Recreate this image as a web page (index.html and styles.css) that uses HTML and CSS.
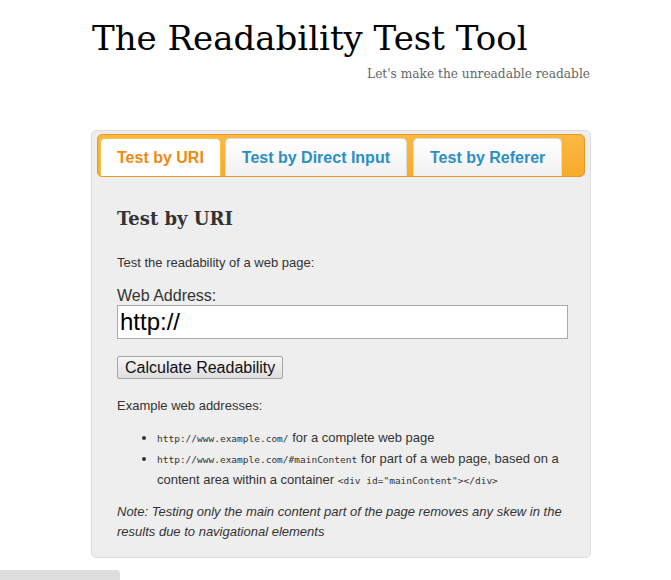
FILE: index.html
```html
<!DOCTYPE html>
<html lang="en">
<head>
    <meta charset="UTF-8">
    <title>The Readability Test Tool</title>
    <link rel="stylesheet" href="styles.css">
</head>
<body>
    <div class="wrap">
        <header class="site-header">
            <h1>The Readability Test Tool</h1>
            <p class="tagline">Let's make the unreadable readable</p>
        </header>

        <div class="panel">
            <ul class="tabs">
                <li class="tab active">Test by URI</li>
                <li class="tab">Test by Direct Input</li>
                <li class="tab">Test by Referer</li>
            </ul>

            <div class="tab-content">
                <h2>Test by URI</h2>
                <p class="intro">Test the readability of a web page:</p>

                <label for="uri" class="field-label">Web Address:</label>
                <input type="text" id="uri" class="uri-input" value="http://">

                <button class="calc-btn">Calculate Readability</button>

                <p class="examples-title">Example web addresses:</p>
                <ul class="examples">
                    <li><code>http://www.example.com/</code> for a complete web page</li>
                    <li><code>http://www.example.com/#mainContent</code> <span>for part of a web page, based on a</span><br><span>content area within a container</span> <code>&lt;div id="mainContent"&gt;&lt;/div&gt;</code></li>
                </ul>

                <p class="note">Note: Testing only the main content part of the page removes any skew in the results due to navigational elements</p>
            </div>
        </div>
    </div>

    <div class="footer-tab"></div>
</body>
</html>
```

FILE: styles.css
```css
body {
    margin: 0;
    background-color: #fff;
    font-family: 'Liberation Sans', Arial, sans-serif;
    color: #333;
}

.wrap {
    width: 500px;
    margin-left: 91px;
}

/* Header */
.site-header {
    padding-top: 15px;
    height: 130px;
    box-sizing: border-box;
}

.site-header h1 {
    margin: 0 0 0 1px;
    font-family: 'DejaVu Serif', serif;
    font-weight: normal;
    font-size: 34px;
    line-height: 46px;
    color: #000;
}

.tagline {
    margin: 6px 1px 0 0;
    text-align: right;
    font-family: 'DejaVu Serif', serif;
    font-size: 12.2px;
    color: #666;
}

/* Panel */
.panel {
    background-color: #eee;
    border: 1px solid #ddd;
    border-radius: 5px;
    padding: 3px 5px 15px 5px;
}

.tabs {
    display: flex;
    list-style: none;
    margin: 0;
    padding: 3px 0 0 2px;
    height: 43px;
    box-sizing: border-box;
    background: linear-gradient(#fbb845, #f7ab2c);
    border: 1px solid #ea9a22;
    border-radius: 5px;
}

.tab {
    padding: 0 16px;
    margin-right: 4px;
    font-size: 16px;
    font-weight: bold;
    line-height: 37px;
    color: #2b8fc4;
    background: linear-gradient(#fff, #f1f1f1);
    border: 1px solid #ddd;
    border-bottom: none;
    border-radius: 5px 5px 0 0;
}

.tab + .tab + .tab {
    margin-left: 2px;
}

.active {
    color: #ee8a12;
    background: #fff;
    border-color: #fcc04d;
}

.tab-content {
    padding: 31px 17px 0 20px;
    font-size: 13px;
}

.tab-content h2 {
    margin: 0 0 23px 0;
    font-family: 'DejaVu Serif', serif;
    font-size: 18px;
    color: #333;
}

.tab-content p {
    margin: 0;
    line-height: 21px;
}

.intro {
    margin-bottom: 13px !important;
}

.field-label {
    display: block;
    font-size: 16px;
    line-height: 19px;
}

.uri-input {
    display: block;
    width: 100%;
    box-sizing: border-box;
    height: 34px;
    margin: 0 0 17px 0;
    padding: 0 2px;
    font-family: 'Liberation Sans', Arial, sans-serif;
    font-size: 24px;
    color: #000;
    border: 1px solid #aaa;
    background: #fff;
}

.calc-btn {
    display: block;
    height: 23px;
    margin: 0 0 16px 0;
    padding: 0 7px;
    font-family: 'Liberation Sans', Arial, sans-serif;
    font-size: 16px;
    color: #111;
    background: linear-gradient(#f6f6f6, #dedede);
    border: 1px solid #a6a6a6;
    border-radius: 2px;
}

.examples {
    margin: 11px 0 12px 0;
    padding-left: 40px;
    line-height: 21px;
}

.examples code {
    font-family: 'DejaVu Sans Mono', monospace;
    font-size: 9.5px;
    line-height: 1;
}

.tab-content .note {
    font-style: italic;
    line-height: 20px;
}

.footer-tab {
    width: 120px;
    height: 11px;
    margin-top: 12px;
    background-color: #ddd;
    border-top-right-radius: 4px;
}
```
